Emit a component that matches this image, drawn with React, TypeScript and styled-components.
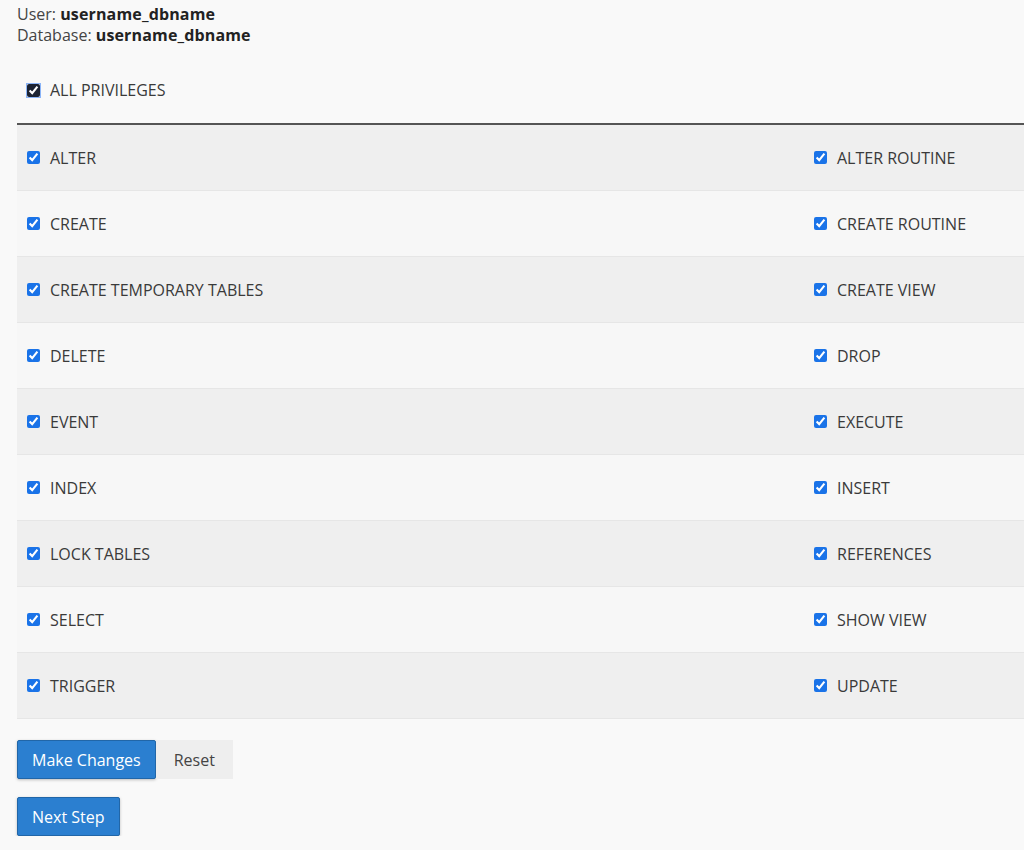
import React, { useState } from "react";
import styled, { createGlobalStyle } from "styled-components";

const GlobalStyle = createGlobalStyle`
  html, body {
    margin: 0;
    padding: 0;
    background: #f9f9f9;
    overflow-x: hidden;
  }
  body {
    font-family: "Open Sans", "Liberation Sans", sans-serif;
    font-size: 16px;
    color: #333;
  }
`;

const Page = styled.div`
  padding: 4px 0 0 17px;
`;

const Info = styled.div`
  line-height: 21px;
  color: #444;

  b {
    font-weight: 700;
    color: #222;
    letter-spacing: 0.15px;
  }
`;

const AllRow = styled.label`
  display: flex;
  align-items: center;
  gap: 10px;
  padding: 0 10px;
  height: 40px;
  margin-top: 24px;
  margin-bottom: 13px;
  color: #3a3a3a;
`;

const Table = styled.div`
  border-top: 2px solid #555;
`;

const Row = styled.div<{ $odd: boolean }>`
  display: grid;
  grid-template-columns: 787px 1fr;
  height: 65px;
  align-items: center;
  background: ${(p) => (p.$odd ? "#efefef" : "#f7f7f7")};
  border-bottom: 1px solid #e6e6e6;
`;

const Cell = styled.label`
  display: flex;
  align-items: center;
  gap: 10px;
  padding: 0 10px;
  color: #3a3a3a;
`;

const Box = styled.input`
  width: 13px;
  height: 13px;
  margin: 0;
  accent-color: #1a73e8;
`;

const AllBox = styled(Box)`
  accent-color: #1c2333;
  outline: 1px solid #8ab4f8;
  outline-offset: 0;
  border-radius: 2px;
`;

const Actions = styled.div`
  display: flex;
  margin-top: 21px;
`;

const Primary = styled.button`
  font-family: inherit;
  font-size: 16px;
  color: #fff;
  background: #2b7fd0;
  border: 1px solid #2166a8;
  border-radius: 2px;
  height: 39px;
  padding: 0 14px;
  box-shadow: 0 1px 3px rgba(0, 0, 0, 0.25);
  cursor: pointer;
`;

const Secondary = styled.button`
  font-family: inherit;
  font-size: 16px;
  color: #444;
  background: #eeeeee;
  border: none;
  height: 39px;
  padding: 0 18px;
  cursor: pointer;
`;

const NextRow = styled.div`
  margin-top: 18px;
`;

const pairs: [string, string][] = [
  ["ALTER", "ALTER ROUTINE"],
  ["CREATE", "CREATE ROUTINE"],
  ["CREATE TEMPORARY TABLES", "CREATE VIEW"],
  ["DELETE", "DROP"],
  ["EVENT", "EXECUTE"],
  ["INDEX", "INSERT"],
  ["LOCK TABLES", "REFERENCES"],
  ["SELECT", "SHOW VIEW"],
  ["TRIGGER", "UPDATE"],
];

const Privilege: React.FC<{ name: string }> = ({ name }) => (
  <Cell>
    <Box type="checkbox" defaultChecked />
    {name}
  </Cell>
);

export default function App() {
  const [all, setAll] = useState(true);
  return (
    <>
      <GlobalStyle />
      <Page>
        <Info>
          User: <b>username_dbname</b>
          <br />
          Database: <b>username_dbname</b>
        </Info>
        <AllRow>
          <AllBox type="checkbox" checked={all} onChange={() => setAll(!all)} />
          ALL PRIVILEGES
        </AllRow>
        <Table>
          {pairs.map(([a, b], i) => (
            <Row key={a} $odd={i % 2 === 0}>
              <Privilege name={a} />
              <Privilege name={b} />
            </Row>
          ))}
        </Table>
        <Actions>
          <Primary>Make Changes</Primary>
          <Secondary>Reset</Secondary>
        </Actions>
        <NextRow>
          <Primary>Next Step</Primary>
        </NextRow>
      </Page>
    </>
  );
}
